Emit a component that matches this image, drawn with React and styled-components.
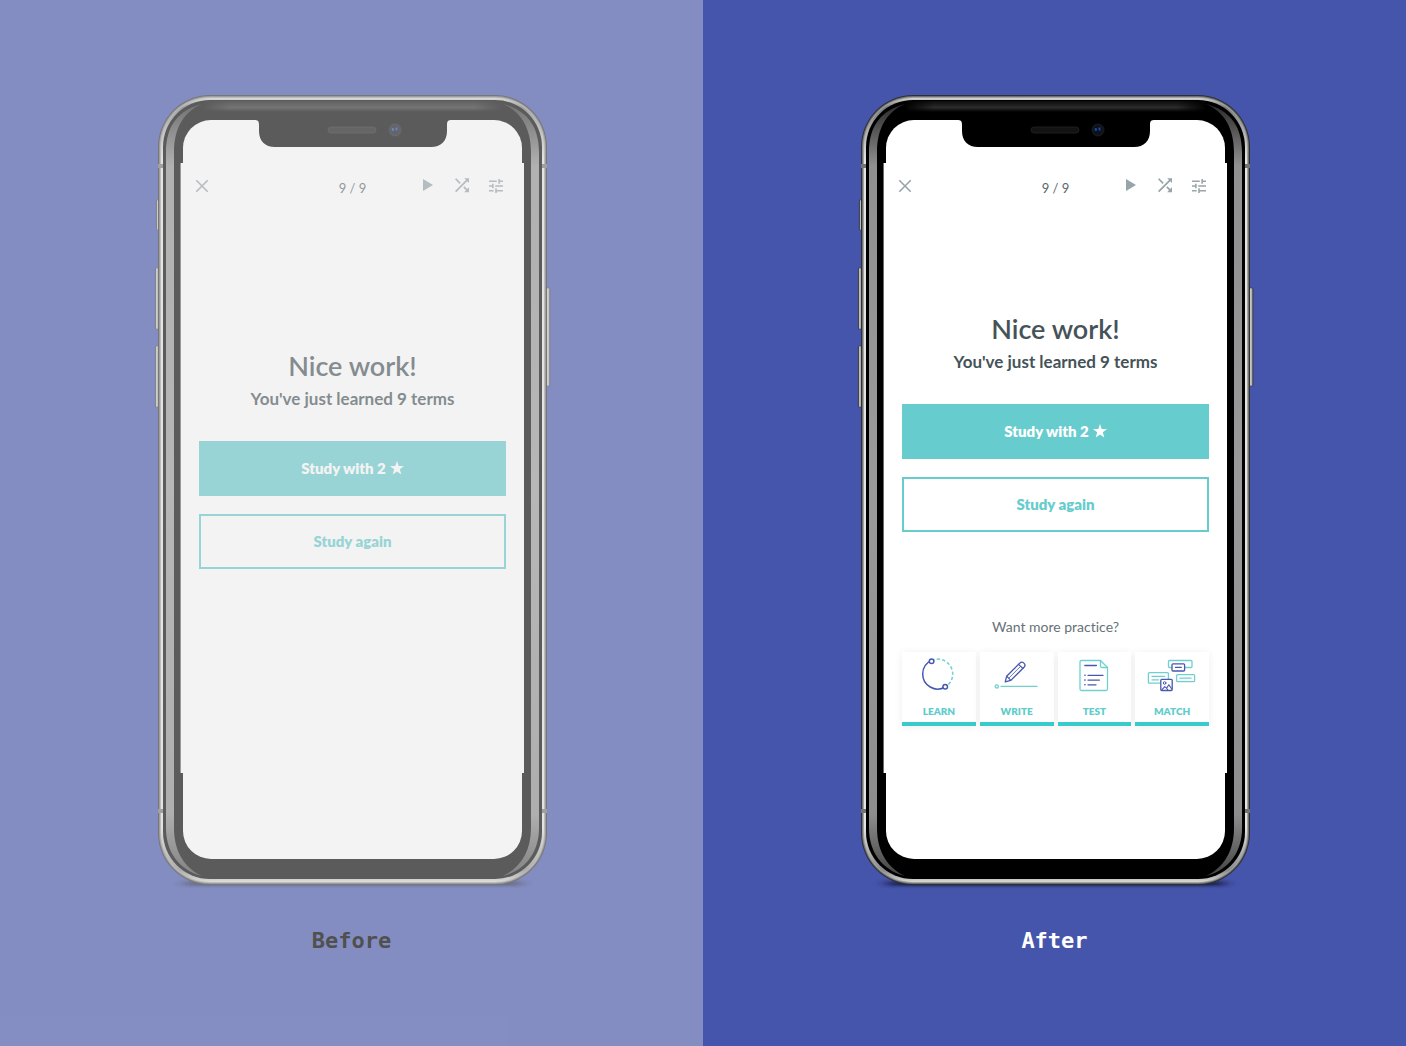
import React from "react";
import styled, { createGlobalStyle } from "styled-components";

const GlobalStyle = createGlobalStyle`
  *, *::before, *::after { box-sizing: border-box; }
  body {
    margin: 0;
    font-family: Lato, "Open Sans", sans-serif;
    font-variant-ligatures: none;
    color: #455358;
    background: #4655ac;
  }
  h1, h2, p { margin: 0; }
  button {
    margin: 0;
    padding: 0;
    border: 0;
    background: none;
    font: inherit;
    color: inherit;
    cursor: pointer;
  }
`;

const Comparison = styled.main`
  display: grid;
  grid-template-columns: repeat(2, minmax(0, 1fr));
  min-height: 100vh;
`;

const Panel = styled.section`
  position: relative;
  display: flex;
  flex-direction: column;
  align-items: center;
  padding-top: 90px;
  background: #4655ac;

  &::after {
    content: "";
    display: ${(p) => (p.$faded ? "block" : "none")};
    position: absolute;
    inset: 0;
    background: rgba(226, 226, 226, 0.404);
    pointer-events: none;
  }
`;

const Caption = styled.h2`
  position: relative;
  z-index: 1;
  margin-top: 37px;
  font-family: "DejaVu Sans Mono", "Liberation Mono", monospace;
  font-size: 22px;
  line-height: 28px;
  font-weight: 700;
  color: ${(p) => (p.$dark ? "#505050" : "#ffffff")};
`;

const Phone = styled.div`
  position: relative;
  width: 399px;
  padding: 30px 29px 31px 31px;
`;

const Hardware = styled.svg`
  position: absolute;
  top: 0;
  left: 0;
  pointer-events: none;
  overflow: visible;
`;

const Screen = styled.div`
  position: relative;
  min-height: 739px;
  padding-top: 43px;
  border-radius: 28px;
  background: #ffffff;
`;

const AppView = styled.div`
  display: flex;
  flex-direction: column;
  min-height: 610px;
  margin: 0 -2px;
  background: #ffffff;
  box-shadow: -1px 0 0 #6a6a6a;
`;

const TopBar = styled.header`
  display: grid;
  grid-template-columns: 1fr auto 1fr;
  align-items: center;
  height: 45px;
  padding: 0 21px 0 14px;
  color: #97a4a9;
`;

const Actions = styled.div`
  display: flex;
  justify-content: flex-end;
  gap: 20px;
`;

const IconButton = styled.button`
  display: flex;
  justify-self: start;
`;

const Counter = styled.p`
  padding: 4px 0 0 7px;
  font-size: 13px;
  line-height: 20px;
  color: #5a676c;
`;

const Message = styled.div`
  display: flex;
  flex-direction: column;
  padding: ${(p) => p.$top}px 18px 0;
  text-align: center;
`;

const Title = styled.h1`
  font-size: 27px;
  line-height: 36px;
  font-weight: 600;
`;

const Subtitle = styled.p`
  padding-top: 3px;
  font-size: 17px;
  line-height: 24px;
  font-weight: 700;
`;

const ButtonStack = styled.div`
  display: grid;
  gap: 18px;
  padding-top: 30px;
`;

const StudyButton = styled.button`
  display: flex;
  align-items: center;
  justify-content: center;
  gap: 4px;
  height: 55px;
  padding-bottom: 2px;
  border: 2px solid #67cccd;
  background: ${(p) => (p.$filled ? "#67cccd" : "#ffffff")};
  color: ${(p) => (p.$filled ? "#ffffff" : "#67cccd")};
  font-size: 15px;
  font-weight: 800;
`;

const Practice = styled.section`
  padding: 85px 18px 0;
`;

const PracticeTitle = styled.h2`
  font-size: 14px;
  line-height: 20px;
  font-weight: 400;
  text-align: center;
  color: #667277;
`;

const ModeGrid = styled.div`
  display: grid;
  grid-template-columns: repeat(4, 1fr);
  gap: 4px;
  padding-top: 15px;
`;

const ModeCard = styled.button`
  display: flex;
  flex-direction: column;
  align-items: center;
  height: 74px;
  padding-top: 5px;
  border-bottom: 4px solid #37cbcc;
  background: #ffffff;
  box-shadow: 0 1px 8px rgba(0, 0, 0, 0.07);
`;

const ModeLabel = styled.span`
  padding-top: 12px;
  font-size: 10px;
  line-height: 12px;
  font-weight: 800;
  color: #5fcdcc;
`;

const BLUE = "#4658b0";
const TEAL = "#70d0d0";

function CloseIcon() {
  return (
    <svg width="14" height="14" viewBox="0 0 14 14" fill="none" stroke="currentColor" strokeWidth="1.6">
      <path d="M1.300 1.300 12.700 12.700M12.700 1.300 1.300 12.700" />
    </svg>
  );
}

function PlayIcon() {
  return (
    <svg width="14" height="14" viewBox="0 0 14 14" fill="currentColor">
      <path d="M2 0 12 6 2 12Z" />
    </svg>
  );
}

function ShuffleIcon() {
  return (
    <svg width="14" height="14" viewBox="4 5 16 16" fill="currentColor" overflow="visible">
      <path d="M10.59 9.17 5.41 4 4 5.41l5.17 5.17 1.42-1.41zM14.5 4l2.04 2.04L4 18.59 5.41 20 17.96 7.46 20 9.5V4h-5.500zm.33 9.41-1.41 1.41 3.13 3.13L14.5 20H20v-5.500l-2.040 2.040-3.130-3.130z" />
    </svg>
  );
}

function TuneIcon() {
  return (
    <svg width="14" height="14" viewBox="3 3 18 18" fill="currentColor">
      <path d="M3 17v2h6v-2H3zM3 5v2h10V5H3zm10 16v-2h8v-2h-8v-2h-2v6h2zM7 9v2H3v2h4v2h2V9H7zm14 4v-2H11v2h10zm-6-4h2V7h4V5h-4V3h-2v6z" />
    </svg>
  );
}

function StarIcon() {
  return (
    <svg width="14" height="14" viewBox="0 0 14 14" fill="currentColor">
      <path d="M7 0 8.7 5 14 5.1 9.8 8.3 11.3 13.4 7 10.4 2.7 13.4 4.2 8.3 0 5.1 5.3 5Z" />
    </svg>
  );
}

function ModeArt({ children }) {
  return (
    <svg
      width="50"
      height="36"
      viewBox="0 0 50 36"
      fill="none"
      strokeWidth="1.3"
      strokeLinecap="round"
      strokeLinejoin="round"
      aria-hidden="true"
    >
      {children}
    </svg>
  );
}

function LearnArt() {
  return (
    <ModeArt>
      <path
        d="M17.600 3.400A15 15 0 0 1 38.700 17A15 15 0 0 1 31.200 30"
        stroke={TEAL}
        strokeLinecap="butt"
        strokeDasharray="3.200 2.200"
        strokeWidth="1.500"
      />
      <path d="M17.600 3.400A15 15 0 0 0 8.700 17A15 15 0 0 0 31.200 30" stroke={BLUE} strokeWidth="1.500" />
      <circle cx="17.600" cy="4.200" r="2.300" stroke={BLUE} fill="#fff" strokeWidth="1.500" />
      <circle cx="31.200" cy="29.800" r="2.300" stroke={BLUE} fill="#fff" strokeWidth="1.500" />
    </ModeArt>
  );
}

function WriteArt() {
  return (
    <ModeArt>
      <path d="M13.2 24.8 14.7 19.2 27.7 6.2A2.8 2.8 0 0 1 32 10.3L18.8 23.4Z" stroke={BLUE} />
      <path d="M14.7 19.2 18.8 23.4M26.6 7.4 31 11.5" stroke={BLUE} strokeWidth="1.1" />
      <path d="M17 21 28.500 9.400" stroke={BLUE} strokeWidth=".8" />
      <circle cx="4.8" cy="29.4" r="1.6" stroke={TEAL} />
      <path d="M9 29.4H45" stroke={TEAL} />
    </ModeArt>
  );
}

function TestArt() {
  return (
    <ModeArt>
      <path d="M12.5 3.5H31.5L38.5 10.5V32a1.5 1.5 0 0 1-1.5 1.5H12.5A1.5 1.5 0 0 1 11 32V5A1.5 1.5 0 0 1 12.5 3.5Z" stroke={TEAL} />
      <path d="M31.5 3.5V9A1.5 1.5 0 0 0 33 10.5H38.5" stroke={TEAL} />
      <path d="M15.8 8.5H27.4M19 18.3H34M19 23.1H30.4M19 27.8H27" stroke={BLUE} />
      <path d="M15.9 18.3h.1M15.9 23.1h.1M15.9 27.8h.1" stroke={BLUE} strokeWidth="1.6" />
    </ModeArt>
  );
}

function MatchArt() {
  return (
    <ModeArt>
      <rect x="21.5" y="3.5" width="23.5" height="7" rx="1" stroke={TEAL} />
      <rect x="25" y="6.8" width="12.6" height="7.2" rx="1" stroke={BLUE} fill="#fff" />
      <path d="M28.5 10.4H34.3" stroke={BLUE} />
      <rect x="1.4" y="15.6" width="20" height="10.6" rx="1" stroke={TEAL} />
      <path d="M5 19.3H17.6M5 22.8H11.6M33 21.2H44" stroke={TEAL} />
      <rect x="29.6" y="17.7" width="18" height="7" rx="1" stroke={TEAL} />
      <rect x="13.8" y="22.3" width="11.4" height="11.2" rx="1" stroke={BLUE} fill="#fff" />
      <circle cx="17.6" cy="26" r="1.3" stroke={BLUE} strokeWidth="1" />
      <path d="M15 32.6 17.8 29.6 19.6 31.2 21.8 27.8 24.6 31.8M19.6 31.2 20.6 32.8" stroke={BLUE} strokeWidth="1.1" />
    </ModeArt>
  );
}

const MODES = [
  { label: "LEARN", Art: LearnArt },
  { label: "WRITE", Art: WriteArt },
  { label: "TEST", Art: TestArt },
  { label: "MATCH", Art: MatchArt },
];

const CRESCENT =
  "M50 14C27 20 14 35 14 62V738C14 762 27 780 50 786C33 778 22 762 22 738V62C22 37 33 21 50 14Z";

function PhoneBody({ id }) {
  const steel = `${id}-steel`;
  const side = `${id}-side`;
  const gloss = `${id}-gloss`;
  const key = `${id}-key`;
  const shade = `${id}-shade`;
  const blur = `${id}-blur`;
  return (
    <Hardware width="399" height="800" viewBox="0 0 399 800" aria-hidden="true">
      <defs>
        <linearGradient id={steel} x1="0" y1="0" x2="0" y2="1">
          <stop offset="0" stopColor="#d4d6d2" />
          <stop offset=".012" stopColor="#77787a" />
          <stop offset=".045" stopColor="#b5b5b5" />
          <stop offset=".08" stopColor="#e4e5e2" />
          <stop offset=".93" stopColor="#e4e5e2" />
          <stop offset=".985" stopColor="#8a8a8a" />
          <stop offset="1" stopColor="#d8d8d4" />
        </linearGradient>
        <linearGradient id={side} x1="0" y1="0" x2="0" y2="1">
          <stop offset="0" stopColor="#2a2a2a" />
          <stop offset=".08" stopColor="#909090" />
          <stop offset=".5" stopColor="#9a9a9a" />
          <stop offset=".92" stopColor="#8d8d8d" />
          <stop offset="1" stopColor="#444" />
        </linearGradient>
        <linearGradient id={gloss} x1="0" y1="0" x2="0" y2="1">
          <stop offset="0" stopColor="#0c0c0c" />
          <stop offset=".6" stopColor="#2c2c2c" />
          <stop offset="1" stopColor="#000" />
        </linearGradient>
        <linearGradient id={shade} x1="0" y1="0" x2="1" y2="0">
          <stop offset="0" stopColor="#000" />
          <stop offset=".1" stopColor="#000" stopOpacity="0" />
          <stop offset=".9" stopColor="#000" stopOpacity="0" />
          <stop offset="1" stopColor="#000" />
        </linearGradient>
        <linearGradient id={key} x1="0" y1="0" x2="1" y2="0">
          <stop offset="0" stopColor="#444" />
          <stop offset=".45" stopColor="#e0e0da" />
          <stop offset="1" stopColor="#555" />
        </linearGradient>
        <filter id={blur} x="-10%" y="-200%" width="120%" height="500%">
          <feGaussianBlur stdDeviation="7 1.500" />
        </filter>
      </defs>
      <rect x="32" y="791" width="338" height="5" rx="2" fill="#1b2250" filter={`url(#${blur})`} />
      <g fill={`url(#${key})`} stroke="#33343c" strokeWidth=".6">
        <rect x="4.3" y="110" width="3.4" height="30" rx="1" />
        <rect x="3.3" y="178" width="3.4" height="61" rx="1" />
        <rect x="3.3" y="256" width="3.4" height="61" rx="1" />
        <rect x="394" y="198" width="4" height="98" rx="1" />
      </g>
      <rect x="6" y="5" width="389" height="790" rx="52" fill="#2f3030" />
      <rect x="7" y="6" width="387" height="788" rx="51" fill="#6f7070" />
      <rect x="8" y="7" width="385" height="786" rx="50" fill="#a2a3a1" />
      <rect x="9" y="8" width="383" height="784" rx="49" fill={`url(#${steel})`} />
      <path d="M6 74h5v4H6ZM390 74h5v4h-5ZM6 719h5v4H6ZM390 719h5v4h-5Z" fill="#747573" />
      <rect x="11" y="10" width="379" height="779" rx="47" fill="#000" />
      <rect x="50" y="11" width="301" height="11" fill={`url(#${gloss})`} />
      <rect x="49" y="11" width="303" height="11" fill={`url(#${shade})`} />
      <path d={CRESCENT} fill={`url(#${side})`} />
      <path d={CRESCENT} fill={`url(#${side})`} transform="translate(401 0) scale(-1 1)" />
    </Hardware>
  );
}

function Notch() {
  return (
    <Hardware width="399" height="60" viewBox="0 0 399 60" aria-hidden="true">
      <path d="M102 29V30C106 30 107 31 107 35V41C107 51 113 57 123 57H279C289 57 295 51 295 41V35C295 31 296 30 300 30V29Z" fill="#000" />
      <rect x="176" y="37" width="48" height="6" rx="3" fill="#131313" stroke="#1e1e1e" />
      <circle cx="243" cy="40" r="6.5" fill="#15171b" />
      <circle cx="243" cy="40" r="4.5" fill="#0a1020" />
      <path d="M240.8 38v3M244.5 37.600v3" stroke="#1b4a92" strokeWidth="2" />
    </Hardware>
  );
}

function StudyScreen({ top, children }) {
  return (
    <AppView>
      <TopBar>
        <IconButton type="button" aria-label="Close"><CloseIcon /></IconButton>
        <Counter>9 / 9</Counter>
        <Actions>
          <IconButton type="button" aria-label="Play"><PlayIcon /></IconButton>
          <IconButton type="button" aria-label="Shuffle"><ShuffleIcon /></IconButton>
          <IconButton type="button" aria-label="Options"><TuneIcon /></IconButton>
        </Actions>
      </TopBar>
      <Message $top={top}>
        <Title>Nice work!</Title>
        <Subtitle>You've just learned 9 terms</Subtitle>
        <ButtonStack>
          <StudyButton type="button" $filled>
            Study with 2 <StarIcon />
          </StudyButton>
          <StudyButton type="button">Study again</StudyButton>
        </ButtonStack>
      </Message>
      {children}
    </AppView>
  );
}

function PhoneMockup({ id, children }) {
  return (
    <Phone>
      <PhoneBody id={id} />
      <Screen>{children}</Screen>
      <Notch />
    </Phone>
  );
}

export default function App() {
  return (
    <>
      <GlobalStyle />
      <Comparison>
        <Panel $faded>
          <PhoneMockup id="before">
            <StudyScreen top={140} />
          </PhoneMockup>
          <Caption $dark>Before</Caption>
        </Panel>
        <Panel>
          <PhoneMockup id="after">
            <StudyScreen top={103}>
              <Practice>
                <PracticeTitle>Want more practice?</PracticeTitle>
                <ModeGrid>
                  {MODES.map(({ label, Art }) => (
                    <ModeCard type="button" key={label}>
                      <Art />
                      <ModeLabel>{label}</ModeLabel>
                    </ModeCard>
                  ))}
                </ModeGrid>
              </Practice>
            </StudyScreen>
          </PhoneMockup>
          <Caption>After</Caption>
        </Panel>
      </Comparison>
    </>
  );
}
